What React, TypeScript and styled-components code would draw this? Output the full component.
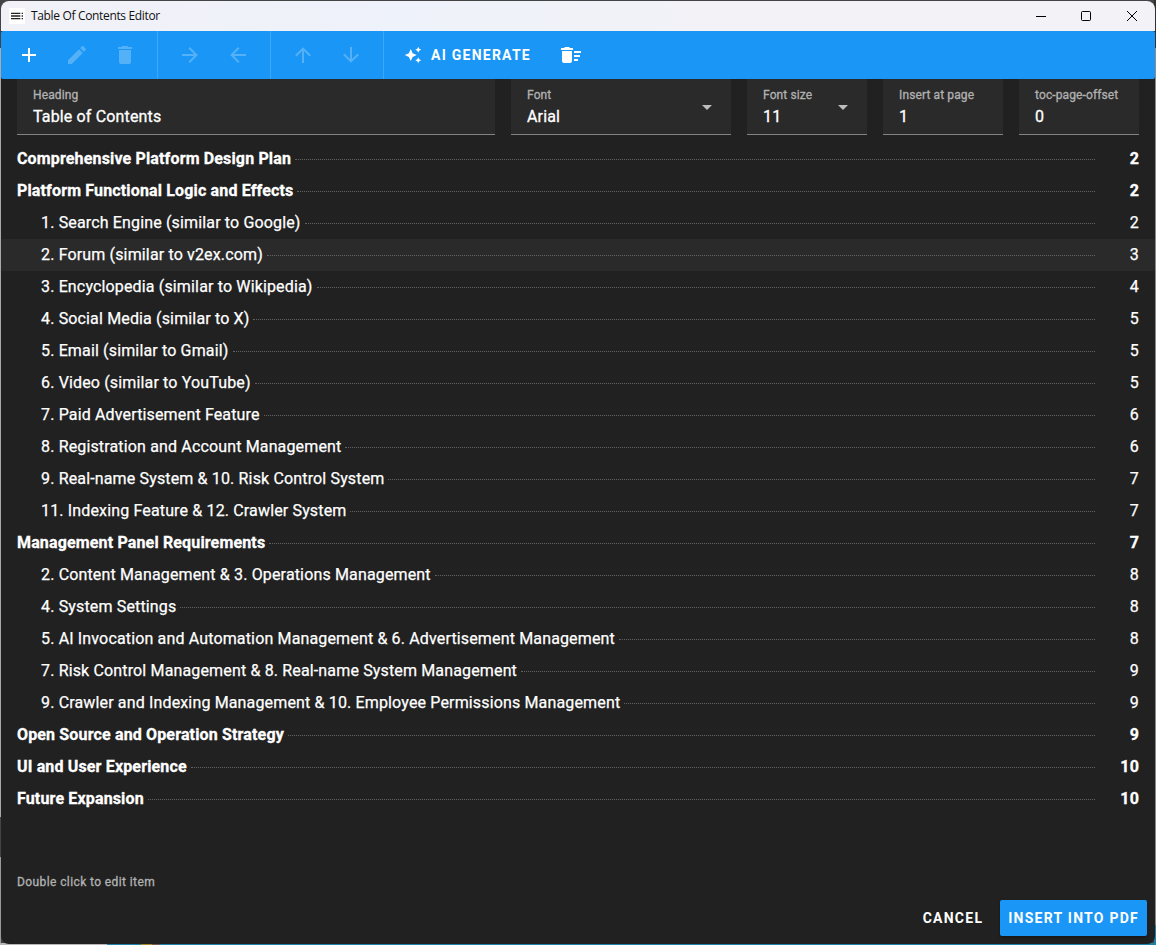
import React from "react";
import styled, { createGlobalStyle } from "styled-components";

const GlobalStyle = createGlobalStyle`
  * { box-sizing: border-box; }
  html, body { margin: 0; padding: 0; background: #444346; }
  body { font-family: Roboto, "Liberation Sans", sans-serif; overflow: hidden; }
  button { font: inherit; border: 0; padding: 0; background: none; }
`;

const Desktop = styled.div`
  height: 945px;
  padding: 1px;
  background:
    linear-gradient(90deg, #b9b5b7 0 107px, #1f80a8 107px 141px, #a98a2a 141px 152px, #705a55 152px 160px, #1f80a8 160px) 0 100% / 100% 2px no-repeat,
    linear-gradient(#434245 0 48px, #a9a9a9 48px 817px, #444 817px 857px, #9a9a9a 857px) 0 0 / 1px 100% no-repeat,
    linear-gradient(#303030 0 48px, #8c8c8c 48px 925px, #1f80a8 925px) 100% 0 / 2px 100% no-repeat,
    #444346;
`;

const Window = styled.main`
  display: flex;
  flex-direction: column;
  height: 943px;
  background: #212121;
  border-radius: 8px;
  overflow: hidden;
  color: #fff;
`;

const TitleBar = styled.header`
  display: flex;
  align-items: center;
  flex: 0 0 30px;
  padding-left: 8px;
  background: linear-gradient(90deg, #f2f1f8, #eef2fa 35%, #f2f2f7 60%);
  color: #111;
`;

const AppIcon = styled.span`
  display: flex;
  width: 16px;
  height: 16px;
  margin-right: 6px;
  background: #fff;
  color: #222;
`;

const WindowTitle = styled.h1`
  flex: 1;
  margin: 0;
  font: 400 12px/16px "Open Sans", "Noto Sans", sans-serif;
  letter-spacing: -0.34px;
`;

const WindowButton = styled.button<{ $width?: number }>`
  display: flex;
  align-items: center;
  justify-content: center;
  width: ${(p) => p.$width ?? 46}px;
  height: 30px;
  color: #000;
`;

const Toolbar = styled.nav`
  display: flex;
  flex: 0 0 48px;
  background: #1996f6;
  border-radius: 2px;
`;

const ToolGroup = styled.div<{ $pad?: string }>`
  display: flex;
  align-items: center;
  padding: ${(p) => p.$pad ?? "0 8px"};
  border-right: 1px solid rgba(255, 255, 255, 0.16);
  &:last-child { border-right: 0; }
`;

const ToolButton = styled.button<{ $muted?: boolean }>`
  display: flex;
  align-items: center;
  justify-content: center;
  width: 48px;
  height: 48px;
  color: ${(p) => (p.$muted ? "rgba(255,255,255,0.26)" : "#fff")};
`;

const GenerateButton = styled.button`
  display: flex;
  align-items: center;
  gap: 9px;
  height: 36px;
  padding: 0 16px;
  color: #fff;
  font-size: 14px;
  font-weight: 700;
  letter-spacing: 1.25px;
`;

const Fields = styled.section`
  display: grid;
  grid-template-columns: 1fr 220px 120px 120px 120px;
  gap: 16px;
  padding: 0 16px;
`;

const FieldBox = styled.label`
  display: flex;
  align-items: center;
  height: 56px;
  padding: 0 12px 0 16px;
  background: #2a2a2a;
  border-bottom: 1px solid #838383;
`;

const FieldText = styled.span`
  display: flex;
  flex: 1;
  flex-direction: column;
  padding-top: 2px;
`;

const FieldLabel = styled.span`
  font-size: 12px;
  line-height: 18px;
  letter-spacing: 0.12px;
  white-space: nowrap;
  color: #b1b1b1;
  -webkit-text-stroke: 0.3px;
`;

const FieldValue = styled.span`
  font-size: 16px;
  line-height: 25px;
  letter-spacing: 0.15px;
  -webkit-text-stroke: 0.3px;
`;

const Entries = styled.ul`
  flex: 1;
  margin: 0;
  padding: 8px 0 0;
  list-style: none;
`;

const Entry = styled.li<{ $nested?: boolean; $active?: boolean }>`
  display: flex;
  align-items: center;
  height: 32px;
  padding: 0 16px 0 ${(p) => (p.$nested ? 40 : 16)}px;
  background: ${(p) => (p.$active ? "#2a2a2a" : "transparent")};
  border-radius: 2px;
  font-size: 16px;
  line-height: 24px;
  letter-spacing: 0.15px;
  font-weight: ${(p) => (p.$nested ? 400 : 700)};
  -webkit-text-stroke: ${(p) => (p.$nested ? "0.25px" : "0.3px")};
`;

const Leader = styled.span`
  flex: 1;
  margin: 1px 0 0 4px;
  border-bottom: 1px dotted #626262;
`;

const PageNumber = styled.span`
  width: 44px;
  text-align: right;
`;

const Hint = styled.p`
  margin: 0;
  padding: 0 16px 8px;
  font-size: 12px;
  line-height: 20px;
  letter-spacing: 0.4px;
  color: #b1b1b1;
  -webkit-text-stroke: 0.3px;
`;

const Actions = styled.footer`
  display: flex;
  justify-content: flex-end;
  gap: 9px;
  padding: 0 8px 8px;
`;

const ActionButton = styled.button<{ $primary?: boolean }>`
  height: 36px;
  padding: 0 8px;
  border-radius: 2px;
  background: ${(p) => (p.$primary ? "#1996f6" : "transparent")};
  box-shadow: ${(p) => (p.$primary ? "0 2px 3px rgba(0,0,0,.3)" : "none")};
  color: #fff;
  font-size: 14px;
  font-weight: 700;
  letter-spacing: 1.25px;
`;

const paths = {
  toc: "M3,9H17V7H3V9M3,13H17V11H3V13M3,17H17V15H3V17M19,17H21V15H19V17M19,7V9H21V7H19M19,13H21V11H19V13Z",
  plus: "M19,13H13V19H11V13H5V11H11V5H13V11H19V13Z",
  pencil:
    "M20.71,7.04C21.1,6.65 21.1,6 20.71,5.63L18.37,3.29C18,2.9 17.35,2.9 16.96,3.29L15.12,5.12L18.87,8.87M3,17.25V21H6.75L17.81,9.93L14.06,6.18L3,17.25Z",
  trash: "M19,4H15.5L14.5,3H9.5L8.5,4H5V6H19M6,19A2,2 0 0,0 8,21H16A2,2 0 0,0 18,19V7H6V19Z",
  right: "M4,11V13H16L10.5,18.5L11.92,19.92L19.84,12L11.92,4.08L10.5,5.5L16,11H4Z",
  left: "M20,11V13H8L13.5,18.5L12.08,19.92L4.16,12L12.08,4.08L13.5,5.5L8,11H20Z",
  up: "M13,20H11V8L5.5,13.5L4.08,12.08L12,4.16L19.92,12.08L18.5,13.5L13,8V20Z",
  down: "M11,4H13V16L18.5,10.5L19.92,11.92L12,19.84L4.08,11.92L5.5,10.5L11,16V4Z",
  sparkle:
    "M19,1L17.74,3.75L15,5L17.74,6.26L19,9L20.25,6.26L23,5L20.25,3.75M9,4L6.5,9.5L1,12L6.5,14.5L9,20L11.5,14.5L17,12L11.5,9.5M19,15L17.74,17.74L15,19L17.74,20.25L19,23L20.25,20.25L23,19L20.25,17.74",
  sweep:
    "M15,16H19V18H15V16M15,8H22V10H15V8M15,12H21V14H15V12M3,18A2,2 0 0,0 5,20H11A2,2 0 0,0 13,18V8H3V18M14,5H11L10,4H6L5,5H2V7H14V5Z",
  caret: "M7,10L12,15L17,10H7Z",
};

const Icon = ({ name, size = 24 }: { name: keyof typeof paths; size?: number }) => (
  <svg width={size} height={size} viewBox="0 0 24 24" fill="currentColor">
    <path d={paths[name]} />
  </svg>
);

const Field = ({ label, value, select }: { label: string; value: string; select?: boolean }) => (
  <FieldBox>
    <FieldText>
      <FieldLabel>{label}</FieldLabel>
      <FieldValue>{value}</FieldValue>
    </FieldText>
    {select && (
      <svg width="24" height="24" viewBox="0 0 24 24" fill="#bdbdbd">
        <path d={paths.caret} />
      </svg>
    )}
  </FieldBox>
);

type Item = { title: string; page: number; nested?: boolean; active?: boolean };

const items: Item[] = [
  { title: "Comprehensive Platform Design Plan", page: 2 },
  { title: "Platform Functional Logic and Effects", page: 2 },
  { title: "1. Search Engine (similar to Google)", page: 2, nested: true },
  { title: "2. Forum (similar to v2ex.com)", page: 3, nested: true, active: true },
  { title: "3. Encyclopedia (similar to Wikipedia)", page: 4, nested: true },
  { title: "4. Social Media (similar to X)", page: 5, nested: true },
  { title: "5. Email (similar to Gmail)", page: 5, nested: true },
  { title: "6. Video (similar to YouTube)", page: 5, nested: true },
  { title: "7. Paid Advertisement Feature", page: 6, nested: true },
  { title: "8. Registration and Account Management", page: 6, nested: true },
  { title: "9. Real-name System & 10. Risk Control System", page: 7, nested: true },
  { title: "11. Indexing Feature & 12. Crawler System", page: 7, nested: true },
  { title: "Management Panel Requirements", page: 7 },
  { title: "2. Content Management & 3. Operations Management", page: 8, nested: true },
  { title: "4. System Settings", page: 8, nested: true },
  { title: "5. AI Invocation and Automation Management & 6. Advertisement Management", page: 8, nested: true },
  { title: "7. Risk Control Management & 8. Real-name System Management", page: 9, nested: true },
  { title: "9. Crawler and Indexing Management & 10. Employee Permissions Management", page: 9, nested: true },
  { title: "Open Source and Operation Strategy", page: 9 },
  { title: "UI and User Experience", page: 10 },
  { title: "Future Expansion", page: 10 },
];

export default function App() {
  return (
    <Desktop>
      <GlobalStyle />
      <Window>
        <TitleBar>
          <AppIcon>
            <Icon name="toc" size={16} />
          </AppIcon>
          <WindowTitle>Table Of Contents Editor</WindowTitle>
          <WindowButton $width={44} aria-label="Minimize">
            <svg width="12" height="12" stroke="currentColor" fill="none">
              <path d="M1 6.5H11" />
            </svg>
          </WindowButton>
          <WindowButton aria-label="Maximize">
            <svg width="12" height="12" stroke="currentColor" fill="none">
              <rect x="1.5" y="1.5" width="9" height="9" rx="1" />
            </svg>
          </WindowButton>
          <WindowButton aria-label="Close">
            <svg width="12" height="12" stroke="currentColor" fill="none">
              <path d="M1 1L11 11M11 1L1 11" />
            </svg>
          </WindowButton>
        </TitleBar>
        <Toolbar>
          <ToolGroup $pad="0 8px 0 4px">
            <ToolButton aria-label="Add"><Icon name="plus" /></ToolButton>
            <ToolButton $muted aria-label="Edit"><Icon name="pencil" /></ToolButton>
            <ToolButton $muted aria-label="Delete"><Icon name="trash" /></ToolButton>
          </ToolGroup>
          <ToolGroup>
            <ToolButton $muted aria-label="Indent"><Icon name="right" /></ToolButton>
            <ToolButton $muted aria-label="Outdent"><Icon name="left" /></ToolButton>
          </ToolGroup>
          <ToolGroup>
            <ToolButton $muted aria-label="Move up"><Icon name="up" /></ToolButton>
            <ToolButton $muted aria-label="Move down"><Icon name="down" /></ToolButton>
          </ToolGroup>
          <ToolGroup $pad="0 4px">
            <GenerateButton><Icon name="sparkle" size={18} />AI GENERATE</GenerateButton>
            <ToolButton aria-label="Clear all"><Icon name="sweep" /></ToolButton>
          </ToolGroup>
        </Toolbar>
        <Fields>
          <Field label="Heading" value="Table of Contents" />
          <Field label="Font" value="Arial" select />
          <Field label="Font size" value="11" select />
          <Field label="Insert at page" value="1" />
          <Field label="toc-page-offset" value="0" />
        </Fields>
        <Entries>
          {items.map((item) => (
            <Entry key={item.title} $nested={item.nested} $active={item.active}>
              <span>{item.title}</span>
              <Leader />
              <PageNumber>{item.page}</PageNumber>
            </Entry>
          ))}
        </Entries>
        <Hint>Double click to edit item</Hint>
        <Actions>
          <ActionButton>CANCEL</ActionButton>
          <ActionButton $primary>INSERT INTO PDF</ActionButton>
        </Actions>
      </Window>
    </Desktop>
  );
}
